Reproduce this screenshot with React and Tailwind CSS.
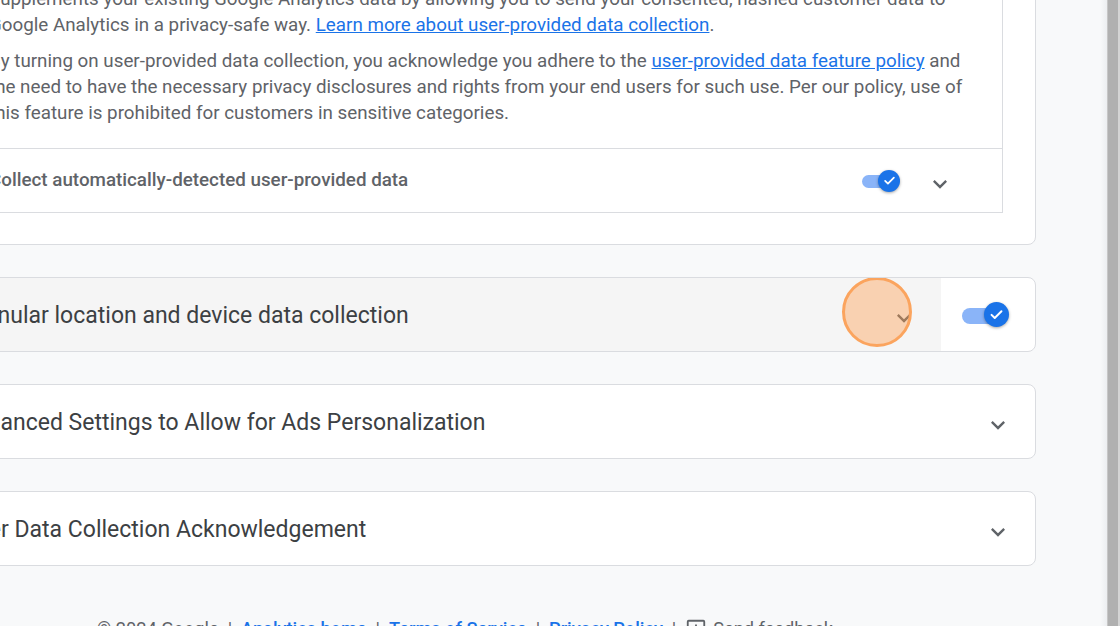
import React from 'react';

const Chevron = ({ className }) => (
  <svg viewBox="0 0 24 24" className={className} fill="currentColor">
    <path d="M16.59 8.59L12 13.17 7.41 8.59 6 10l6 6 6-6z" />
  </svg>
);

function Toggle({ big }) {
  return (
    <div className={big ? 'relative w-[47px] h-[26px]' : 'relative w-[38px] h-[22px]'}>
      <div
        className={
          big
            ? 'absolute left-0 top-[6px] w-[36px] h-[16px] rounded-full bg-[#8ab4f8]'
            : 'absolute left-0 top-[5px] w-[30px] h-[13px] rounded-full bg-[#8ab4f8]'
        }
      />
      <div
        className={
          big
            ? 'absolute right-0 top-0 w-[25px] h-[25px] rounded-full bg-[#1a73e8] flex items-center justify-center shadow-[0_1px_3px_rgba(0,0,0,0.35)]'
            : 'absolute right-0 top-0 w-[22px] h-[22px] rounded-full bg-[#1a73e8] flex items-center justify-center shadow-[0_1px_3px_rgba(0,0,0,0.35)]'
        }
      >
        <svg viewBox="0 0 24 24" className={big ? 'w-[17px] h-[17px]' : 'w-[15px] h-[15px]'} fill="none" stroke="white" strokeWidth="2.8" strokeLinecap="round" strokeLinejoin="round">
          <path d="M5 12.5l4.5 4.5L19 7.5" />
        </svg>
      </div>
    </div>
  );
}

function ExpandCard({ title }) {
  return (
    <div className="h-[75px] rounded-lg border border-[#dadce0] bg-white flex items-center pl-[21px] pr-[17px]">
      <div className="mt-[3px] flex-1 text-[23px] text-[#3c4043] whitespace-nowrap">{title}</div>
      <button className="mt-[6px] w-10 h-10 flex items-center justify-center text-[#5f6368]">
        <Chevron className="w-[28px] h-[28px]" />
      </button>
    </div>
  );
}

export default function App() {
  return (
    <div className="w-[1120px] h-[626px] overflow-hidden bg-[#f8f9fa] flex font-['Roboto',sans-serif]">
      <div className="flex-1 overflow-hidden">
        <div className="ml-[-60px] mt-[-68px] w-[1096px] flex flex-col gap-8">
          {/* user-provided data card */}
          <div className="rounded-b-lg border border-[#dadce0] bg-white pt-[32px] pr-[32px] pl-[32px] pb-[31px]">
            <div className="border border-[#dadce0] bg-white">
              <div className="pl-[15px] pr-[28px] pt-[20px] pb-[22px] border-b border-[#dadce0] text-[18.8px] leading-[26px] text-[#5f6368]">
                <p>
                  Supplements your existing Google Analytics data by allowing you to send your consented, hashed customer data to Google Analytics in a privacy-safe way.{' '}
                  <a href="#" className="text-[#1a73e8] underline">Learn more about user-provided data collection</a>.
                </p>
                <p className="mt-[10px]">
                  By turning on user-provided data collection, you acknowledge you adhere to the{' '}
                  <a href="#" className="text-[#1a73e8] underline">user-provided data feature policy</a>{' '}
                  and the need to have the necessary privacy disclosures and rights from your end users for such use. Per our policy, use of this feature is prohibited for customers in sensitive categories.
                </p>
              </div>
              <div className="h-[63px] flex items-center pl-[15px]">
                <div className="flex-1 text-[18.8px] font-medium text-[#5f6368]">Collect automatically-detected user-provided data</div>
                <Toggle />
                <button className="mt-[6px] ml-[20px] mr-[42px] w-10 h-10 flex items-center justify-center text-[#5f6368]">
                  <Chevron className="w-[28px] h-[28px]" />
                </button>
              </div>
            </div>
          </div>

          {/* granular data card, header hovered */}
          <div className="h-[75px] rounded-lg border border-[#dadce0] bg-white flex overflow-hidden">
            <div className="relative flex-1 bg-[#f5f5f5] flex items-center pl-[21px] pr-[17px]">
              <div className="mt-[3px] flex-1 text-[23px] text-[#3c4043] whitespace-nowrap">Granular location and device data collection</div>
              <button className="mt-[6px] w-10 h-10 flex items-center justify-center text-[#5f6368]">
                <Chevron className="w-[28px] h-[28px]" />
              </button>
              <div className="absolute right-[29px] top-[-1px] w-[70px] h-[70px] rounded-full border-[3px] border-[#fba45e] bg-[#ff9c4a]/40" />
            </div>
            <div className="w-[94px] pr-[5px] flex items-center justify-center">
              <Toggle big />
            </div>
          </div>

          <ExpandCard title="Enhanced Settings to Allow for Ads Personalization" />
          <ExpandCard title="User Data Collection Acknowledgement" />

          <div className="mt-[18px] pl-[157px] flex items-center text-[18.2px] leading-[26px] text-[#5f6368] whitespace-nowrap">
            <span>© 2024 Google</span>
            <span className="mx-[9px]">|</span>
            <a href="#" className="text-[#1a73e8] font-medium">Analytics home</a>
            <span className="mx-[9px]">|</span>
            <a href="#" className="text-[#1a73e8] font-medium">Terms of Service</a>
            <span className="mx-[9px]">|</span>
            <a href="#" className="text-[#1a73e8] font-medium">Privacy Policy</a>
            <span className="mx-[9px]">|</span>
            <svg viewBox="0 0 24 24" className="w-[22px] h-[22px] mr-[6px]" fill="none" stroke="#5f6368" strokeWidth="2">
              <path d="M4 3h16a1 1 0 0 1 1 1v12a1 1 0 0 1-1 1H7l-4 4V4a1 1 0 0 1 1-1z" />
              <path d="M12 7v4M12 13v1" />
            </svg>
            <span>Send feedback</span>
          </div>
        </div>
      </div>

      {/* scrollbar */}
      <div className="w-[7px] bg-gradient-to-r from-[#f8f9fa] to-[#eceef0]" />
      <div className="w-[11px] bg-[#b0b0b0] border-l border-[#c6c6c6]" />
      <div className="w-[2px] bg-[#d4d4d4]" />
    </div>
  );
}
